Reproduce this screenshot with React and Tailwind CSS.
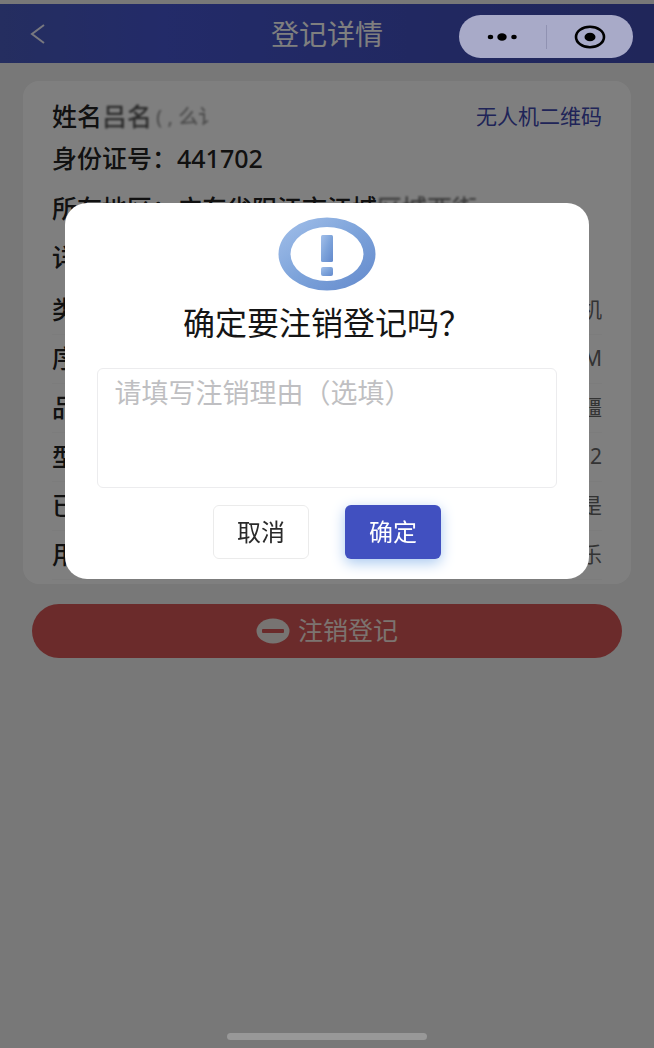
import React from 'react';

const ownerRows = [
  { label: '所在地区：', value: '广东省阳江市江城', masked: '区城西街' },
  { label: '详细地址：', value: '', masked: '' },
];

const droneRows = [
  { label: '类型', value: '无人机' },
  { label: '序列号', value: 'M' },
  { label: '品牌', value: '大疆' },
  { label: '型号', value: '2' },
  { label: '已实名', value: '是' },
  { label: '用途', value: '娱乐' },
];

const Header = () => (
  <header className="mt-1 grid h-[59px] grid-cols-3 items-center bg-linear-to-r from-[#4a5cc0] via-[#4656d2] via-25% to-[#404cb4] px-[21px]">
    <button type="button" aria-label="返回" className="ml-2 w-4">
      <svg viewBox="0 0 16 20" className="h-5 w-4" fill="none" stroke="#f0f0ff" strokeWidth="2">
        <path d="M15 1 L3 10 L15 19" />
      </svg>
    </button>
    <h1 className="text-center text-[28px] leading-10 text-white">登记详情</h1>
    {/* Capsule stays above the mask */}
    <div className="relative z-20 mt-[6px] flex h-[43px] w-[174px] items-center justify-self-end rounded-full bg-[#a8aac8]">
      <button type="button" aria-label="更多" className="flex flex-1 justify-center">
        <svg viewBox="0 0 30 10" className="h-[10px] w-[30px]">
          <ellipse cx="3.5" cy="5" rx="2.7" ry="2.2" />
          <ellipse cx="15" cy="5" rx="4.7" ry="3.8" />
          <ellipse cx="27" cy="5" rx="2.7" ry="2.2" />
        </svg>
      </button>
      <span className="h-6 w-px bg-[#9092b2]" />
      <button type="button" aria-label="关闭" className="flex flex-1 justify-center">
        <svg viewBox="0 0 32 24" className="h-6 w-8">
          <ellipse cx="16" cy="12" rx="14" ry="10.2" fill="none" stroke="#000" strokeWidth="2.6" />
          <ellipse cx="16" cy="12" rx="5.5" ry="4.3" />
        </svg>
      </button>
    </div>
  </header>
);

const DetailCard = () => (
  <section className="mx-[23px] mt-[18px] rounded-2xl bg-white px-[29px] pt-[15px] pb-1 text-[25px] font-medium text-[#222]">
    <div className="flex h-[42px] items-center justify-between">
      <p className="flex items-center">
        姓名
        <span className="text-[#555] blur-[1px]">吕名</span>
        <span className="ml-1 text-xl text-[#999] blur-[1px]">( , 么讠</span>
      </p>
      <a href="#qrcode" className="text-[21px] font-normal text-[#4048b0]">
        无人机二维码
      </a>
    </div>
    <p className="flex h-[42px] items-center">
      身份证号：<span>441702</span>
    </p>
    <div className="pt-1">
      {ownerRows.map((row) => (
        <p key={row.label} className="flex h-[49px] items-center">
          {row.label}
          {row.value}
          <span className="text-[#777] blur-[1px]">{row.masked}</span>
        </p>
      ))}
    </div>
    <dl className="pt-1">
      {droneRows.map((row) => (
        <div key={row.label} className="flex h-[49px] items-center justify-between border-b border-[#f9f9f9]">
          <dt>{row.label}</dt>
          <dd className="text-[21px] font-normal text-[#666]">{row.value}</dd>
        </div>
      ))}
    </dl>
  </section>
);

const ConfirmDialog = () => (
  <div className="fixed inset-0 z-10 bg-black/50 px-[10%] pt-[203px]">
    <div
      role="dialog"
      aria-labelledby="dialog-title"
      className="flex flex-col items-center rounded-[22px] bg-white px-8 pt-[14px] pb-5"
    >
      <svg viewBox="0 0 98 74" className="h-[74px] w-[98px]">
        <defs>
          <linearGradient id="ring" x1="0" y1="0" x2="1" y2="1">
            <stop offset="0" stopColor="#a3c0ea" />
            <stop offset="0.5" stopColor="#7da3da" />
            <stop offset="1" stopColor="#6389cc" />
          </linearGradient>
        </defs>
        <path
          fill="url(#ring)"
          fillRule="evenodd"
          d="M49 0.5 A48.5 36.5 0 1 0 49 73.5 A48.5 36.5 0 1 0 49 0.5 Z M49 10 A36.5 27 0 1 1 49 64 A36.5 27 0 1 1 49 10 Z"
        />
        <rect x="43" y="18" width="12" height="27" rx="1.5" fill="url(#ring)" />
        <rect x="43" y="50" width="12" height="9" rx="2" fill="url(#ring)" />
      </svg>
      <h2 id="dialog-title" className="mt-3 text-[32px] leading-10 text-[#151515]">
        确定要注销登记吗？
      </h2>
      <textarea
        aria-label="注销理由"
        placeholder="请填写注销理由（选填）"
        className="mt-[25px] h-[120px] w-full resize-none rounded-md border border-[#ececee] px-4 py-1 text-[27px] leading-10 outline-none placeholder:text-[#bfbfc2]"
      />
      <div className="mt-[17px] flex gap-9 text-2xl">
        <button type="button" className="h-[54px] w-24 rounded-md border border-[#ebebeb] text-[#2a2a2a]">
          取消
        </button>
        <button type="button" className="h-[54px] w-24 rounded-md bg-[#4150c0] text-white shadow-[0_4px_14px_#a9c9f0]">
          确定
        </button>
      </div>
    </div>
  </div>
);

const App = () => (
  <div
    lang="zh-CN"
    className="relative flex min-h-screen flex-col bg-[#f0f0f0] font-['Noto_Sans','Noto_Sans_CJK_SC',sans-serif]"
  >
    <Header />
    <DetailCard />
    <button
      type="button"
      className="mx-8 mt-5 flex h-[54px] items-center justify-center gap-2 rounded-full bg-[#d65656] text-[25px] text-[#f8e8e0]"
    >
      <svg viewBox="0 0 34 26" className="h-[26px] w-[34px]">
        <ellipse cx="17" cy="13" rx="16.5" ry="12.5" fill="#eee8e4" />
        <rect x="6" y="11" width="22" height="4" rx="1" fill="#d65656" />
      </svg>
      注销登记
    </button>
    <span className="relative z-20 mx-auto mt-auto mb-2 h-[7px] w-[200px] rounded-full bg-[#989898]" />
    <ConfirmDialog />
  </div>
);

export default App;
